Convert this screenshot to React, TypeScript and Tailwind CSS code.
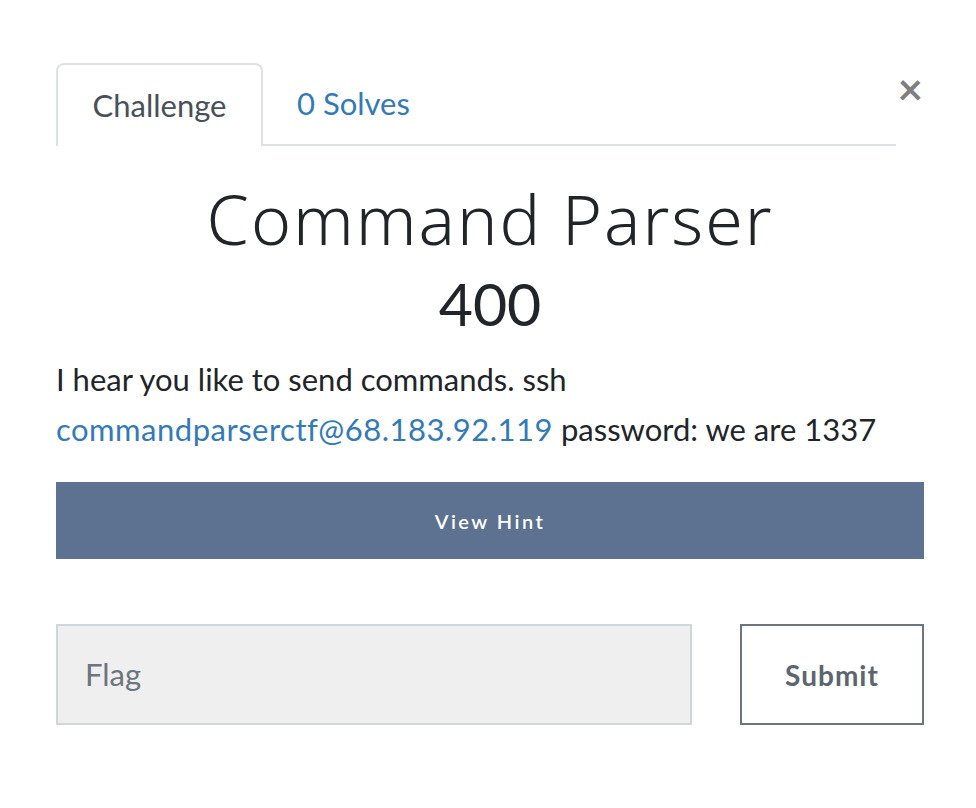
export default function App() {
  return (
    <div className="w-[976px] h-[808px] bg-white pl-[56px] pt-[63px] font-['Lato','Noto_Sans',sans-serif]">
      <div className="w-[868px]">
        <div className="flex items-start">
          <nav className="flex w-[840px] border-b-2 border-[#dee2e6]">
            <div className="-mb-[2px] h-[83px] w-[207px] rounded-t-lg border-2 border-b-0 border-[#dee2e6] bg-white flex items-center justify-center text-[31px] text-[#495057]">
              Challenge
            </div>
            <a className="h-[81px] px-[34px] flex items-center text-[31px] text-[#337ab7]">
              0 Solves
            </a>
          </nav>
          <button className="ml-auto mt-[3px] mr-[1px] text-[44px] leading-none font-bold text-[#7f7f7f]">
            ×
          </button>
        </div>

        <h2 className="mt-[31px] text-center text-[68px] leading-[84px] tracking-[2px] text-[#212529] font-['Noto_Sans',sans-serif] font-light">
          Command Parser
        </h2>
        <h3 className="mt-[3px] text-center text-[59px] leading-[80px] text-[#212529]">
          400
        </h3>

        <p className="mt-[10px] text-[31px] leading-[50px] text-[#212529]">
          I hear you like to send commands. ssh{" "}
          <a className="text-[#337ab7] tracking-[0.5px]">commandparserctf@68.183.92.119</a> password: we are 1337
        </p>

        <button className="mt-[28px] w-[868px] h-[77px] bg-[#5c7290] text-white text-[20px] tracking-[2.5px] font-semibold">
          View Hint
        </button>

        <div className="mt-[65px] flex gap-[48px]">
          <div className="w-[636px] h-[101px] bg-[#efefef] border-2 border-[#d1d6db] flex items-center pl-[27px] text-[31px] text-[#6c757d]">
            Flag
          </div>
          <button className="w-[184px] h-[101px] border-2 border-[#6c757d] bg-white text-[28px] font-bold tracking-[1px] text-[#5c6670]">
            Submit
          </button>
        </div>
      </div>
    </div>
  );
}
